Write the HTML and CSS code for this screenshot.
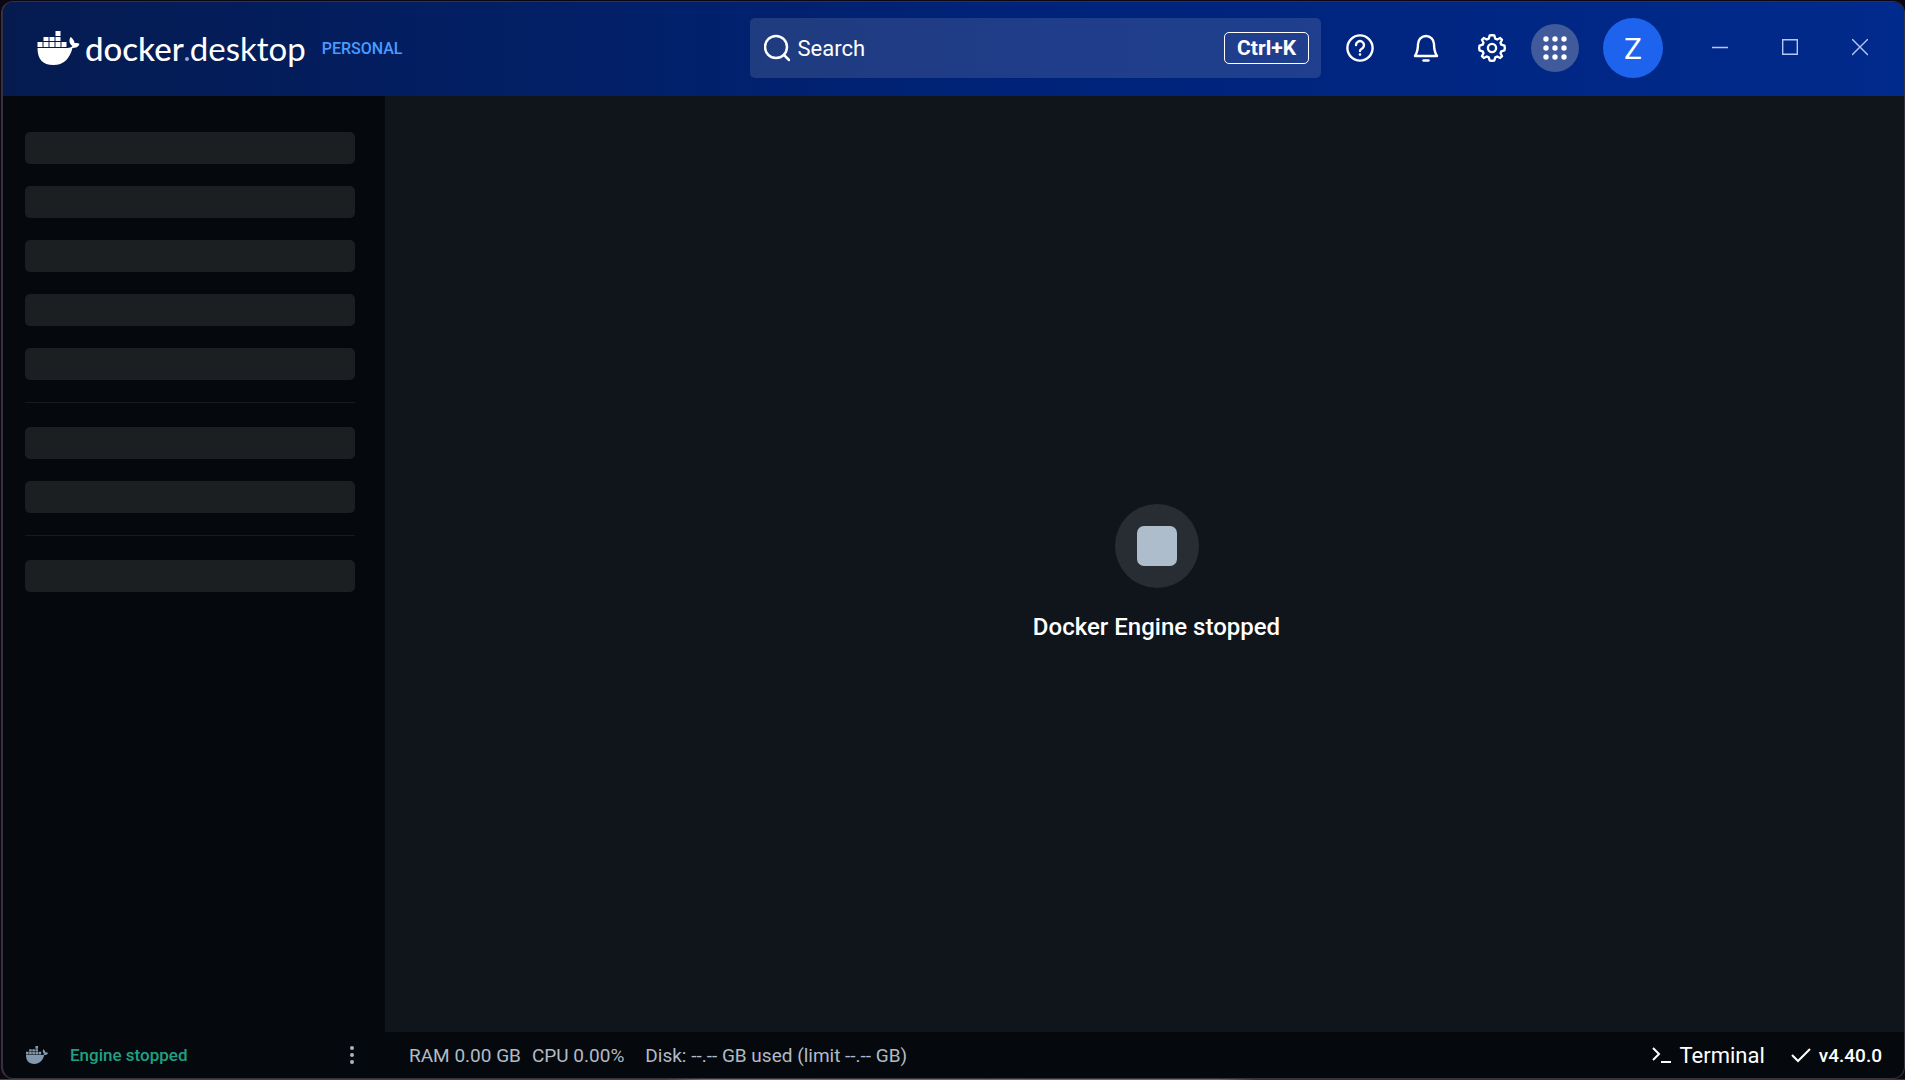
FILE: index.html
```html
<!DOCTYPE html>
<html lang="en">
<head>
    <meta charset="UTF-8">
    <meta name="viewport" content="width=device-width, initial-scale=1.0">
    <title>Docker Desktop</title>
    <link rel="stylesheet" href="styles.css">
</head>
<body>

    <svg class="sprite" aria-hidden="true">
        <symbol id="whale" viewBox="0 0 42 34">
            <path d="M0 17h30c2 0 4-1 5-2-3-2-4-5-2-9 2 1 4 4 4 6 2-.3 4 0 5 1-1 3-4 4-7 4C32 28 26 34 16 34 5 34 0 28 0 17z"/>
            <path d="M0 11h5v5H0zM6 11h5v5H6zM12 11h5v5h-5zM18 11h5v5h-5zM24 11h5v5h-5zM6 6h5v4H6zM12 6h5v4h-5zM18 6h5v4h-5zM18 0h5v5h-5z"/>
        </symbol>
    </svg>

    <div class="window">
        <header class="titlebar">
            <a href="#" class="brand">
                <svg class="brand-icon" aria-hidden="true"><use href="#whale"/></svg>
                <span class="brand-name"><b>docker</b><i class="mark"></i>desktop</span>
            </a>
            <span class="plan">PERSONAL</span>

            <div class="titlebar-right">
                <label class="search">
                    <svg width="26" height="28" viewBox="0 0 26 28" fill="none" stroke="currentColor" stroke-width="2.5" stroke-linecap="round" aria-hidden="true">
                        <circle cx="12" cy="13" r="11"/>
                        <path d="M20 21l5 5"/>
                    </svg>
                    <input type="text" placeholder="Search" aria-label="Search">
                    <kbd>Ctrl+K</kbd>
                </label>

                <div class="actions">
                    <button class="icon-button" aria-label="Help">
                        <svg width="28" height="28" viewBox="0 0 28 28" fill="none" stroke="currentColor" stroke-width="2.4" stroke-linecap="round" aria-hidden="true">
                            <circle cx="14" cy="14" r="12.6"/>
                            <path d="M10 11a4 4 0 1 1 6.5 3.2C15 15.2 14 15.7 14 17"/>
                            <circle cx="14" cy="20.5" r="1.3" fill="currentColor" stroke="none"/>
                        </svg>
                    </button>
                    <button class="icon-button" aria-label="Notifications">
                        <svg width="28" height="28" viewBox="0 0 28 28" fill="none" stroke="currentColor" stroke-width="2.4" stroke-linecap="round" stroke-linejoin="round" aria-hidden="true">
                            <path d="M3 22h22c-2-3-3-5-3-12a8 8 0 0 0-16 0c0 7-1 9-3 12z"/>
                            <path d="M11.5 26.5h5"/>
                        </svg>
                    </button>
                    <button class="icon-button" aria-label="Settings">
                        <svg width="28" height="28" viewBox="0 0 24 24" fill="none" stroke="currentColor" stroke-width="2" stroke-linejoin="round" aria-hidden="true">
                            <circle cx="12" cy="12" r="3.5"/>
                            <path d="M12 1l2 .3.8 2.7 1.7.7L19 3.4 20.6 5l-1.3 2.5.7 1.7 2.7.8.3 2-.3 2-2.7.8-.7 1.7 1.3 2.5-1.6 1.6-2.5-1.3-1.7.7-.8 2.7-2 .3-2-.3-.8-2.7-1.7-.7L5 20.6 3.4 19l1.3-2.5L4 14.8 1.3 14 1 12l.3-2L4 9.2l.7-1.7L3.4 5 5 3.4l2.5 1.3L9.2 4l.8-2.7z"/>
                        </svg>
                    </button>
                    <button class="icon-button apps" aria-label="Apps">
                        <svg width="24" height="26" viewBox="0 0 24 26" fill="currentColor" aria-hidden="true">
                            <circle cx="3" cy="4" r="2.7"/><circle cx="12" cy="4" r="2.7"/><circle cx="21" cy="4" r="2.7"/>
                            <circle cx="3" cy="13" r="2.7"/><circle cx="12" cy="13" r="2.7"/><circle cx="21" cy="13" r="2.7"/>
                            <circle cx="3" cy="22" r="2.7"/><circle cx="12" cy="22" r="2.7"/><circle cx="21" cy="22" r="2.7"/>
                        </svg>
                    </button>
                </div>

                <button class="avatar" aria-label="Account">Z</button>

                <div class="window-controls">
                    <button aria-label="Minimize">
                        <svg width="16" height="18" viewBox="0 0 16 18" stroke="currentColor" stroke-width="1.4" fill="none" aria-hidden="true"><path d="M0 8.5h16"/></svg>
                    </button>
                    <button aria-label="Maximize">
                        <svg width="16" height="18" viewBox="0 0 16 18" stroke="currentColor" stroke-width="1.4" fill="none" aria-hidden="true"><path d="M.7.7h14.6v14.6H.7z"/></svg>
                    </button>
                    <button aria-label="Close">
                        <svg width="16" height="18" viewBox="0 0 16 18" stroke="currentColor" stroke-width="1.4" fill="none" aria-hidden="true"><path d="M0 0l16 16M16 0L0 16"/></svg>
                    </button>
                </div>
            </div>
        </header>

        <nav class="sidebar" aria-label="Loading menu">
            <div class="group">
                <div class="skeleton"></div>
                <div class="skeleton"></div>
                <div class="skeleton"></div>
                <div class="skeleton"></div>
                <div class="skeleton"></div>
            </div>
            <div class="group">
                <div class="skeleton"></div>
                <div class="skeleton"></div>
            </div>
            <div class="group">
                <div class="skeleton"></div>
            </div>
        </nav>

        <main class="content">
            <div class="stop-icon"></div>
            <h1>Docker Engine stopped</h1>
        </main>

        <footer class="statusbar">
            <div class="engine">
                <svg class="engine-icon" aria-hidden="true"><use href="#whale"/></svg>
                <span>Engine stopped</span>
                <button class="more" aria-label="Engine options">
                    <svg width="4" height="18" viewBox="0 0 4 18" fill="currentColor" aria-hidden="true">
                        <circle cx="2" cy="2" r="2"/><circle cx="2" cy="9" r="2"/><circle cx="2" cy="16" r="2"/>
                    </svg>
                </button>
            </div>
            <div class="stats">
                <span>RAM 0.00 GB</span>
                <span>CPU 0.00%</span>
                <span class="disk">Disk: --.-- GB used (limit --.-- GB)</span>
            </div>
            <button class="terminal">
                <svg width="20" height="18" viewBox="0 0 20 18" fill="none" stroke="currentColor" stroke-width="2" aria-hidden="true">
                    <path d="M1 2l6 6-6 6M9 16h10"/>
                </svg>
                Terminal
            </button>
            <button class="version">
                <svg width="20" height="16" viewBox="0 0 20 16" fill="none" stroke="currentColor" stroke-width="2" aria-hidden="true">
                    <path d="M1 8l6 6L19 2"/>
                </svg>
                v4.40.0
            </button>
        </footer>
    </div>

</body>
</html>
```
FILE: styles.css
```css
* {
    box-sizing: border-box;
}

body {
    margin: 0;
    padding: 1px 0 1px 1px;
    background: #0c0713 linear-gradient(to right, #4a3f52 35%, #7d6c68 37%, #7a6080 64%, #4a2a2e 66%) bottom / 100% 1px no-repeat;
    font-family: Roboto, sans-serif;
    color: #fff;
}

button {
    padding: 0;
    border: none;
    background: none;
    color: inherit;
    font: inherit;
    cursor: pointer;
}

svg {
    display: block;
    flex: none;
}

.sprite {
    position: absolute;
    width: 0;
    height: 0;
}

.window {
    display: grid;
    grid-template-columns: 382px 1fr;
    grid-template-rows: 94px 1fr 46px;
    height: calc(100vh - 2px);
    border: 1px solid #37303f;
    border-left-width: 2px;
    border-radius: 12px;
    background-color: #05090d;
    overflow: hidden;
}

/* Title bar */
.titlebar {
    grid-column: 1 / 3;
    display: flex;
    align-items: center;
    padding: 0 36px 2px 34px;
    background: linear-gradient(to right, #051b50, #00237a 55%, #002a8c);
}

.brand {
    display: flex;
    align-items: center;
    gap: 5px;
    color: #fff;
    text-decoration: none;
}

.brand-icon {
    width: 43px;
    height: 34px;
    fill: currentColor;
}

.brand-name {
    font-family: Lato, sans-serif;
    font-size: 33px;
    font-weight: 400;
    line-height: 40px;
}

.brand-name b {
    font-weight: 500;
}

.mark {
    display: inline-block;
    width: 4px;
    height: 4px;
    margin: 0 1px;
    border-radius: 50%;
    background-color: #8fa8dc;
}

.plan {
    margin-left: 16px;
    color: #4a9bff;
    font-size: 16px;
    font-weight: 500;
}

.titlebar-right {
    display: flex;
    align-items: center;
    margin-left: auto;
}

.search {
    display: flex;
    align-items: center;
    gap: 8px;
    width: 30vw;
    height: 60px;
    padding: 0 12px 0 14px;
    border-radius: 5px;
    background-color: rgba(255, 255, 255, 0.12);
}

.search input {
    flex: 1;
    min-width: 0;
    padding: 0;
    border: none;
    outline: none;
    background: none;
    color: #fff;
    font: 22px Roboto, sans-serif;
}

.search input::placeholder {
    color: #fff;
    opacity: 1;
}

.search kbd {
    padding: 0 12px;
    border: 1px solid #fff;
    border-radius: 5px;
    font: 700 21px/30px Roboto, sans-serif;
}

.actions {
    display: flex;
    gap: 18px;
    margin-left: 15px;
}

.icon-button {
    display: flex;
    align-items: center;
    justify-content: center;
    width: 48px;
    height: 48px;
    border-radius: 50%;
}

.apps {
    margin-left: -3px;
    background-color: #405a9c;
}

.avatar {
    width: 60px;
    height: 60px;
    margin-left: 24px;
    border-radius: 50%;
    background-color: #1d63ed;
    font-size: 30px;
}

.window-controls {
    display: flex;
    gap: 54px;
    margin-left: 49px;
    color: #b5c8f5;
}

/* Sidebar placeholders */
.sidebar {
    padding: 36px 30px 0 22px;
}

.group {
    display: flex;
    flex-direction: column;
    gap: 22px;
    padding-bottom: 22px;
}

.group + .group {
    padding-top: 24px;
    border-top: 1px solid #171b1f;
}

.skeleton {
    height: 32px;
    border-radius: 5px;
    background-color: #1b1f22;
}

/* Main area */
.content {
    display: flex;
    flex-direction: column;
    align-items: center;
    justify-content: center;
    gap: 24px;
    padding: 18px 0 0 24px;
    background-color: #10151b;
}

.stop-icon {
    display: flex;
    align-items: center;
    justify-content: center;
    width: 84px;
    height: 84px;
    border-radius: 50%;
    background-color: #272d32;
}

.stop-icon::before {
    content: "";
    width: 40px;
    height: 40px;
    border-radius: 7px;
    background-color: #adbdcb;
}

.content h1 {
    margin: 0;
    font-size: 24px;
    font-weight: 500;
    line-height: 30px;
}

/* Status bar */
.statusbar {
    grid-column: 1 / 3;
    display: flex;
    align-items: center;
    padding-right: 22px;
}

.engine {
    display: flex;
    align-items: center;
    width: 382px;
    padding: 0 31px 0 23px;
    color: #20a083;
    font-size: 17px;
    font-weight: 500;
}

.engine-icon {
    width: 22px;
    height: 18px;
    margin-right: 22px;
    fill: #8299ae;
}

.more {
    margin-left: auto;
    color: #a9b5c2;
}

.stats {
    display: flex;
    flex: 1;
    gap: 11px;
    padding-left: 24px;
    color: #b3bac6;
    font-size: 19px;
}

.disk {
    margin-left: 10px;
}

.terminal,
.version {
    display: flex;
    align-items: center;
    gap: 8px;
}

.terminal {
    font-size: 22px;
}

.version {
    margin-left: 26px;
    font-size: 19px;
    font-weight: 500;
}
```
